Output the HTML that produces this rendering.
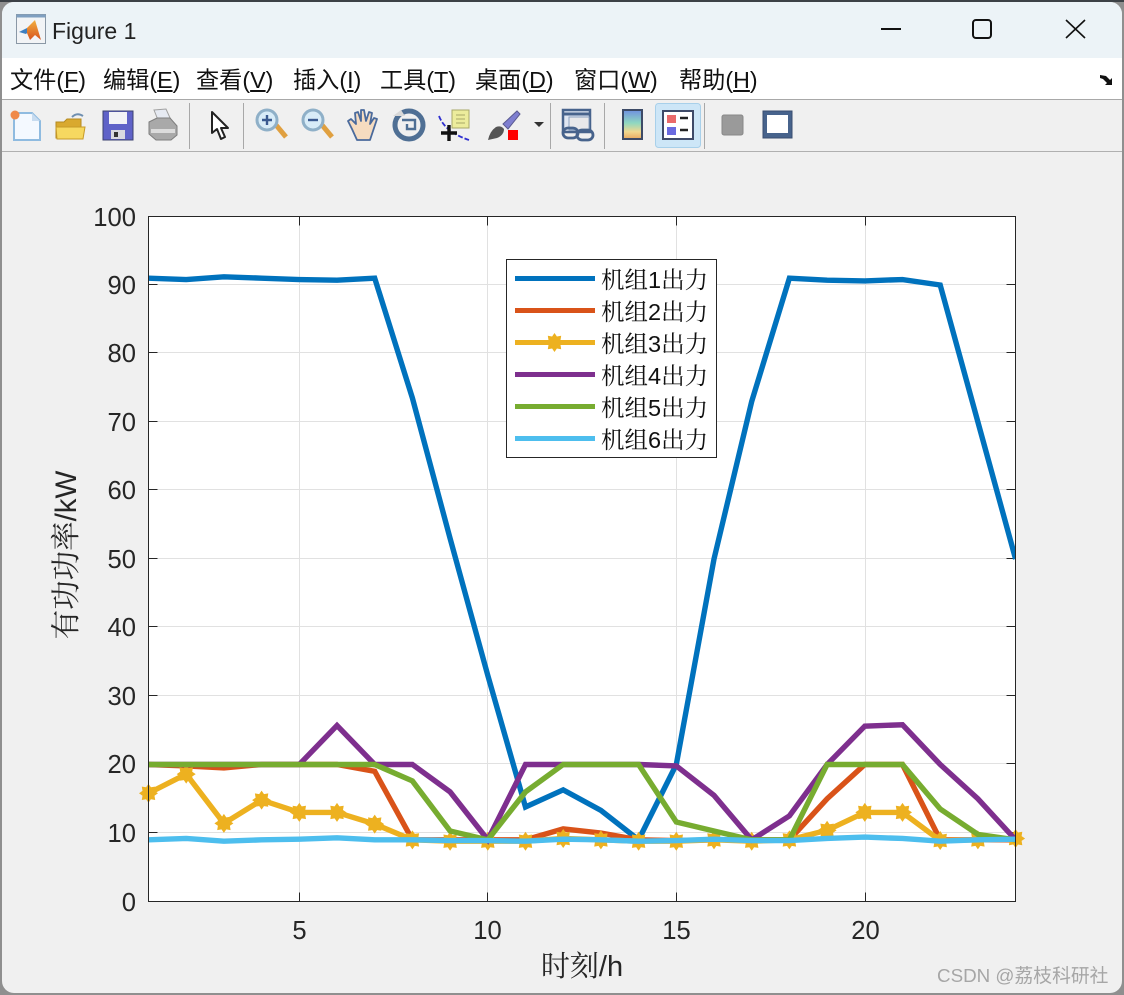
<!DOCTYPE html>
<html lang="zh"><head><meta charset="utf-8"><title>Figure 1</title>
<style>
html,body{margin:0;padding:0;width:1124px;height:995px;overflow:hidden;background:#8f8f8f}
#top{position:absolute;left:0;top:0;width:1124px;height:2px;background:#3c4146}
#win{position:absolute;left:2px;top:2px;width:1120px;height:991px;background:#f0f0f0;border-radius:12px 12px 12px 12px;overflow:hidden}
#tb{position:absolute;left:0;top:0;width:1120px;height:56px;background:#ecf3f7}
#mn{position:absolute;left:0;top:56px;width:1120px;height:41px;background:#fff;border-bottom:1px solid #a8a8a8}
#bar{position:absolute;left:0;top:149px;width:1120px;height:1px;background:#b0b0b0}
.t{position:absolute;white-space:nowrap;color:#111}
.m{top:64px;font:23.2px/32px "Liberation Sans","Noto Sans CJK SC",sans-serif}
svg{position:absolute;left:0;top:0}
</style></head><body>
<div id="top"></div>
<div id="win"><div id="tb"></div><div id="mn"></div><div id="bar"></div></div>
<div class="t" style="left:52px;top:16px;font:23px/30px 'Liberation Sans',sans-serif;color:#222">Figure 1</div>
<div class="t m" style="left:10px">文件(<u>F</u>)</div>
<div class="t m" style="left:103px">编辑(<u>E</u>)</div>
<div class="t m" style="left:196px">查看(<u>V</u>)</div>
<div class="t m" style="left:293px">插入(<u>I</u>)</div>
<div class="t m" style="left:380px">工具(<u>T</u>)</div>
<div class="t m" style="left:475px">桌面(<u>D</u>)</div>
<div class="t m" style="left:574px">窗口(<u>W</u>)</div>
<div class="t m" style="left:679px">帮助(<u>H</u>)</div>
<svg width="1124" height="995" viewBox="0 0 1124 995" xmlns="http://www.w3.org/2000/svg">
<defs>
<polygon id="s" fill="#edb120" points="0,-9.5 2.4,-6 6.7,-6.7 6,-2.4 9.5,0 6,2.4 6.7,6.7 2.4,6 0,9.5 -2.4,6 -6.7,6.7 -6,2.4 -9.5,0 -6,-2.4 -6.7,-6.7 -2.4,-6"/>
<linearGradient id="cb" x1="0" y1="0" x2="0" y2="1"><stop offset="0" stop-color="#6f8fe0"/><stop offset=".45" stop-color="#8fd8c0"/><stop offset=".75" stop-color="#f0d890"/><stop offset="1" stop-color="#e8a860"/></linearGradient>
<linearGradient id="pk" x1="0" y1="0" x2="0" y2="1"><stop offset="0" stop-color="#f2b040"/><stop offset="1" stop-color="#d8541c"/></linearGradient>
<clipPath id="ax"><rect x="148.5" y="216.5" width="867" height="685"/></clipPath>
<style>.l{fill:none;stroke-width:5.4;vector-effect:non-scaling-stroke;stroke-linejoin:miter}</style>
</defs>

<!-- title icon -->
<rect x="16.5" y="14.5" width="29" height="29" fill="#f2f4f6" stroke="#8a98a6"/>
<rect x="16.5" y="14.5" width="29" height="3" fill="#7f9fc0"/>
<path d="M19 32l8-4 3 2-4 4z" fill="#3f7fbf"/>
<path d="M27 28l8-8 6 20-6-5-5 5-3-7z" fill="url(#pk)"/>

<!-- window controls -->
<path d="M881 29h20" stroke="#111" stroke-width="2"/>
<rect x="973" y="20" width="18" height="18" rx="3" fill="none" stroke="#111" stroke-width="2"/>
<path d="M1066 20l19 18M1085 20l-19 18" stroke="#111" stroke-width="1.6"/>
<!-- undock arrow -->
<path d="M1100 75l6 1 4 4 2-2v7h-7l2-2-4-4-3-1z" fill="#111"/>

<!-- toolbar separators -->
<g stroke="#a8a8a8"><path d="M189.5 103v46M243.5 103v46M550.5 103v46M604.5 103v46M704.5 103v46"/></g>

<!-- new -->
<path d="M14 113h18l8 8v19H14z" fill="#f4f9ff" stroke="#8fbbe0" stroke-width="2"/><path d="M32 113v8h8z" fill="#c8dcf0"/>
<circle cx="15" cy="115" r="4.5" fill="#f08a4a"/>
<!-- open -->
<path d="M56 122h8l3-3h14v19H56z" fill="#d9a92f" stroke="#b58a20"/><path d="M56 127h29l-2 12H57z" fill="#f6d860" stroke="#c79a28"/><path d="M72 117q5-5 11-1" fill="none" stroke="#6f8fb0" stroke-width="2"/>
<!-- save -->
<rect x="103" y="111" width="30" height="29" fill="#5f62c8" stroke="#3c4270"/><rect x="109" y="112" width="18" height="12" fill="#f2f2f6"/><rect x="111" y="130" width="14" height="9" fill="#d8d8e0"/><rect x="114" y="132" width="4" height="5" fill="#333"/>
<!-- print -->
<path d="M154 110l12-1 5 11h-13z" fill="#e6eaf2" stroke="#a0a0a0"/><path d="M149 122l8-4h13l7 8v9l-6 5h-15l-7-6z" fill="#a9a9a9" stroke="#7e7e7e"/><path d="M151 129h24v4h-24z" fill="#dcdcdc"/>
<!-- arrow -->
<path d="M212 112v21l5-4 4 10 4-2-4-9h7z" fill="#fff" stroke="#222" stroke-width="2" stroke-linejoin="round"/>
<!-- zoom in -->
<line x1="276" y1="125" x2="286" y2="137" stroke="#e0a040" stroke-width="5"/>
<circle cx="267" cy="120" r="10" fill="#d8ecf8" stroke="#8fb0c8" stroke-width="3"/>
<path d="M262 120h10M267 115v10" stroke="#3a5a90" stroke-width="2.4"/>
<!-- zoom out -->
<line x1="322" y1="125" x2="332" y2="137" stroke="#e0a040" stroke-width="5"/>
<circle cx="313" cy="120" r="10" fill="#d8ecf8" stroke="#8fb0c8" stroke-width="3"/>
<path d="M308 120h10" stroke="#3a5a90" stroke-width="2.4"/>
<!-- hand -->
<path d="M352 129l-4-8 3-2 5 5-1-11 3-1 3 9 0-11h3l2 11 3-9 3 1-2 11 4-6 3 1-4 12-3 9h-13z" fill="#f6dcc0" stroke="#4a6a9c" stroke-width="1.8" stroke-linejoin="round"/>
<!-- rotate -->
<circle cx="409" cy="125" r="14" fill="none" stroke="#4f6f94" stroke-width="5"/>
<path d="M402 120h13v9h-8v-5" fill="none" stroke="#4f6f94" stroke-width="2.4"/>
<path d="M393 116l8-6 4 6z" fill="#d8d8d8"/>
<!-- data cursor -->
<rect x="452" y="110" width="17" height="18" fill="#ecec9c" stroke="#a8a868"/><path d="M456 115h9M456 119h9M456 123h9" stroke="#a8a868"/>
<path d="M439 116q6 16 30 24" fill="none" stroke="#3030d0" stroke-width="1.8" stroke-dasharray="5 2"/>
<path d="M441 133h16M449 125v16" stroke="#111" stroke-width="3.4"/>
<!-- brush -->
<path d="M503 124l14-13 3 3-12 15z" fill="#7f7fd0" stroke="#5a5a90"/><path d="M488 140q2-9 8-13 5-2 8 2 0 6-7 9z" fill="#555"/>
<rect x="508" y="130" width="10" height="10" fill="#f00"/>
<path d="M534 122h10l-5 5z" fill="#333"/>
<!-- link -->
<rect x="563" y="110" width="27" height="22" fill="#dfe6f2" stroke="#47638c" stroke-width="2.5"/><path d="M563 114h27" stroke="#47638c" stroke-width="3"/>
<rect x="569" y="117" width="20" height="13" fill="#e8e8ea" stroke="#8aa0c0"/>
<rect x="563" y="128" width="15" height="10" rx="5" fill="none" stroke="#47638c" stroke-width="2.8"/><rect x="577" y="130" width="16" height="10" rx="5" fill="none" stroke="#47638c" stroke-width="2.8"/>
<!-- colorbar -->
<rect x="623" y="110" width="19" height="29" fill="url(#cb)" stroke="#3c4a66" stroke-width="2"/>
<!-- legend selected -->
<rect x="655.5" y="103.5" width="45" height="44" rx="3" fill="#cde6f7" stroke="#a8d0ea"/>
<rect x="663" y="111" width="30" height="28" fill="#fff" stroke="#3e4a68" stroke-width="2"/>
<rect x="667" y="115" width="9" height="8" fill="#ea6a6a"/><rect x="667" y="127" width="9" height="8" fill="#6a6ae0"/>
<path d="M680 118h8M680 130h8" stroke="#222" stroke-width="2.4"/>
<!-- gray square -->
<rect x="722" y="115" width="21" height="20" rx="2" fill="#9a9a9a" stroke="#888"/>
<!-- frame -->
<rect x="763" y="111" width="29" height="27" fill="#47638c" stroke="#3a4e70"/><rect x="767" y="115" width="21" height="18" fill="#fff"/>

<!-- axes -->
<rect x="148.5" y="216.5" width="867" height="685" fill="#fff"/>
<g stroke="#e1e1e1" stroke-width="1">
<path d="M299.5 216.5V901.5M487.5 216.5V901.5M676.5 216.5V901.5M865.5 216.5V901.5"/>
<path d="M148.5 284.5H1015.5M148.5 352.5H1015.5M148.5 421.5H1015.5M148.5 489.5H1015.5M148.5 558.5H1015.5M148.5 626.5H1015.5M148.5 695.5H1015.5M148.5 763.5H1015.5M148.5 832.5H1015.5"/>
</g>
<g stroke="#262626" stroke-width="1">
<path d="M299.5 901.5v-9M487.5 901.5v-9M676.5 901.5v-9M865.5 901.5v-9M299.5 216.5v9M487.5 216.5v9M676.5 216.5v9M865.5 216.5v9"/>
<path d="M148.5 284.5h9M148.5 352.5h9M148.5 421.5h9M148.5 489.5h9M148.5 558.5h9M148.5 626.5h9M148.5 695.5h9M148.5 763.5h9M148.5 832.5h9"/>
<path d="M1015.5 284.5h-9M1015.5 352.5h-9M1015.5 421.5h-9M1015.5 489.5h-9M1015.5 558.5h-9M1015.5 626.5h-9M1015.5 695.5h-9M1015.5 763.5h-9M1015.5 832.5h-9"/>
</g>

<g clip-path="url(#ax)"><g transform="translate(110.8 901.5) scale(37.7 -6.85)">
<polyline class="l" stroke="#0072bd" points="1,91 2,90.8 3,91.2 4,91 5,90.8 6,90.7 7,91 8,73.5 9,53 10,33 11,13.8 12,16.3 13,13.3 14,9 15,20 16,50 17,73 18,91 19,90.7 20,90.6 21,90.8 22,90 23,70 24,50"/>
<polyline class="l" stroke="#d95319" points="1,20 2,19.8 3,19.5 4,20 5,20 6,20 7,19 8,9 9,9 10,9 11,9 12,10.6 13,10 14,9 15,8.9 16,9 17,9 18,9 19,15 20,20 21,20 22,9 23,9 24,9"/>
<polyline class="l" stroke="#edb120" points="1,15.8 2,18.6 3,11.4 4,14.8 5,13 6,13 7,11.3 8,9 9,8.8 10,8.8 11,8.8 12,9.2 13,9 14,8.8 15,8.8 16,9 17,8.8 18,9 19,10.4 20,13 21,13 22,8.9 23,9 24,9.2"/>
</g></g>
<use href="#s" x="148.5" y="793.3"/><use href="#s" x="186.2" y="774.1"/><use href="#s" x="223.9" y="823.4"/><use href="#s" x="261.6" y="800.1"/><use href="#s" x="299.3" y="812.4"/><use href="#s" x="337" y="812.4"/><use href="#s" x="374.7" y="824.1"/><use href="#s" x="412.4" y="839.9"/><use href="#s" x="450.1" y="841.2"/><use href="#s" x="487.8" y="841.2"/><use href="#s" x="525.5" y="841.2"/><use href="#s" x="563.2" y="838.5"/><use href="#s" x="600.9" y="839.9"/><use href="#s" x="638.6" y="841.2"/><use href="#s" x="676.3" y="841.2"/><use href="#s" x="714" y="839.9"/><use href="#s" x="751.7" y="841.2"/><use href="#s" x="789.4" y="839.9"/><use href="#s" x="827.1" y="830.3"/><use href="#s" x="864.8" y="812.4"/><use href="#s" x="902.5" y="812.4"/><use href="#s" x="940.2" y="840.5"/><use href="#s" x="977.9" y="839.9"/><use href="#s" x="1015.6" y="838.5"/>
<g clip-path="url(#ax)"><g transform="translate(110.8 901.5) scale(37.7 -6.85)">
<polyline class="l" stroke="#7e2f8e" points="1,20 2,20 3,20 4,20 5,20 6,25.7 7,20 8,20 9,16 10,9 11,20 12,20 13,20 14,20 15,19.8 16,15.5 17,9 18,12.5 19,20 20,25.6 21,25.8 22,20 23,15 24,9"/>
<polyline class="l" stroke="#77ac30" points="1,20 2,20 3,20 4,20 5,20 6,20 7,20 8,17.6 9,10.3 10,9 11,16 12,20 13,20 14,20 15,11.6 16,10.3 17,9 18,9 19,20 20,20 21,20 22,13.5 23,9.8 24,9"/>
<polyline class="l" stroke="#4dbeee" points="1,9 2,9.2 3,8.8 4,9 5,9.1 6,9.3 7,9 8,9 9,8.9 10,8.9 11,8.8 12,9.1 13,9 14,8.8 15,8.9 16,9.1 17,8.9 18,8.9 19,9.2 20,9.4 21,9.2 22,8.8 23,9 24,9.1"/>
</g></g>
<rect x="148.5" y="216.5" width="867" height="685" fill="none" stroke="#262626"/>

<!-- tick labels -->
<g font-family="'Liberation Sans',sans-serif" font-size="25.6" fill="#262626" text-anchor="end">
<text x="136" y="226">100</text><text x="136" y="294">90</text><text x="136" y="362">80</text><text x="136" y="431">70</text><text x="136" y="499">60</text><text x="136" y="568">50</text><text x="136" y="636">40</text><text x="136" y="705">30</text><text x="136" y="773">20</text><text x="136" y="842">10</text><text x="136" y="911">0</text>
</g>
<g font-family="'Liberation Sans',sans-serif" font-size="25.6" fill="#262626" text-anchor="middle">
<text x="299.5" y="939">5</text><text x="487.5" y="939">10</text><text x="676.5" y="939">15</text><text x="865.5" y="939">20</text>
</g>
<text x="582" y="976" text-anchor="middle" font-family="'Liberation Sans','Noto Serif CJK SC',serif" font-size="29" fill="#262626">时刻/h</text>
<text transform="translate(76 555) rotate(-90)" text-anchor="middle" font-family="'Liberation Sans','Noto Serif CJK SC',serif" font-size="29.5" fill="#262626">有功功率/kW</text>

<!-- legend -->
<rect x="506.5" y="259.5" width="210" height="198" fill="#fff" stroke="#262626"/>
<g stroke-width="5">
<path d="M515 278.5h80" stroke="#0072bd"/><path d="M515 310.5h80" stroke="#d95319"/><path d="M515 342.5h80" stroke="#edb120"/><path d="M515 374.5h80" stroke="#7e2f8e"/><path d="M515 406.5h80" stroke="#77ac30"/><path d="M515 438.5h80" stroke="#4dbeee"/>
</g>
<use href="#s" x="554.5" y="342.5"/>
<g font-family="'Liberation Sans','Noto Serif CJK SC',serif" font-size="23.5" fill="#111">
<text x="601" y="288">机组1出力</text><text x="601" y="320">机组2出力</text><text x="601" y="352">机组3出力</text><text x="601" y="384">机组4出力</text><text x="601" y="416">机组5出力</text><text x="601" y="448">机组6出力</text>
</g>
<!-- watermark -->
<text x="937" y="982" font-family="'Liberation Sans','Noto Sans CJK SC',sans-serif" font-size="18.8" fill="#a6a6a6">CSDN @荔枝科研社</text>
</svg>
</body></html>
